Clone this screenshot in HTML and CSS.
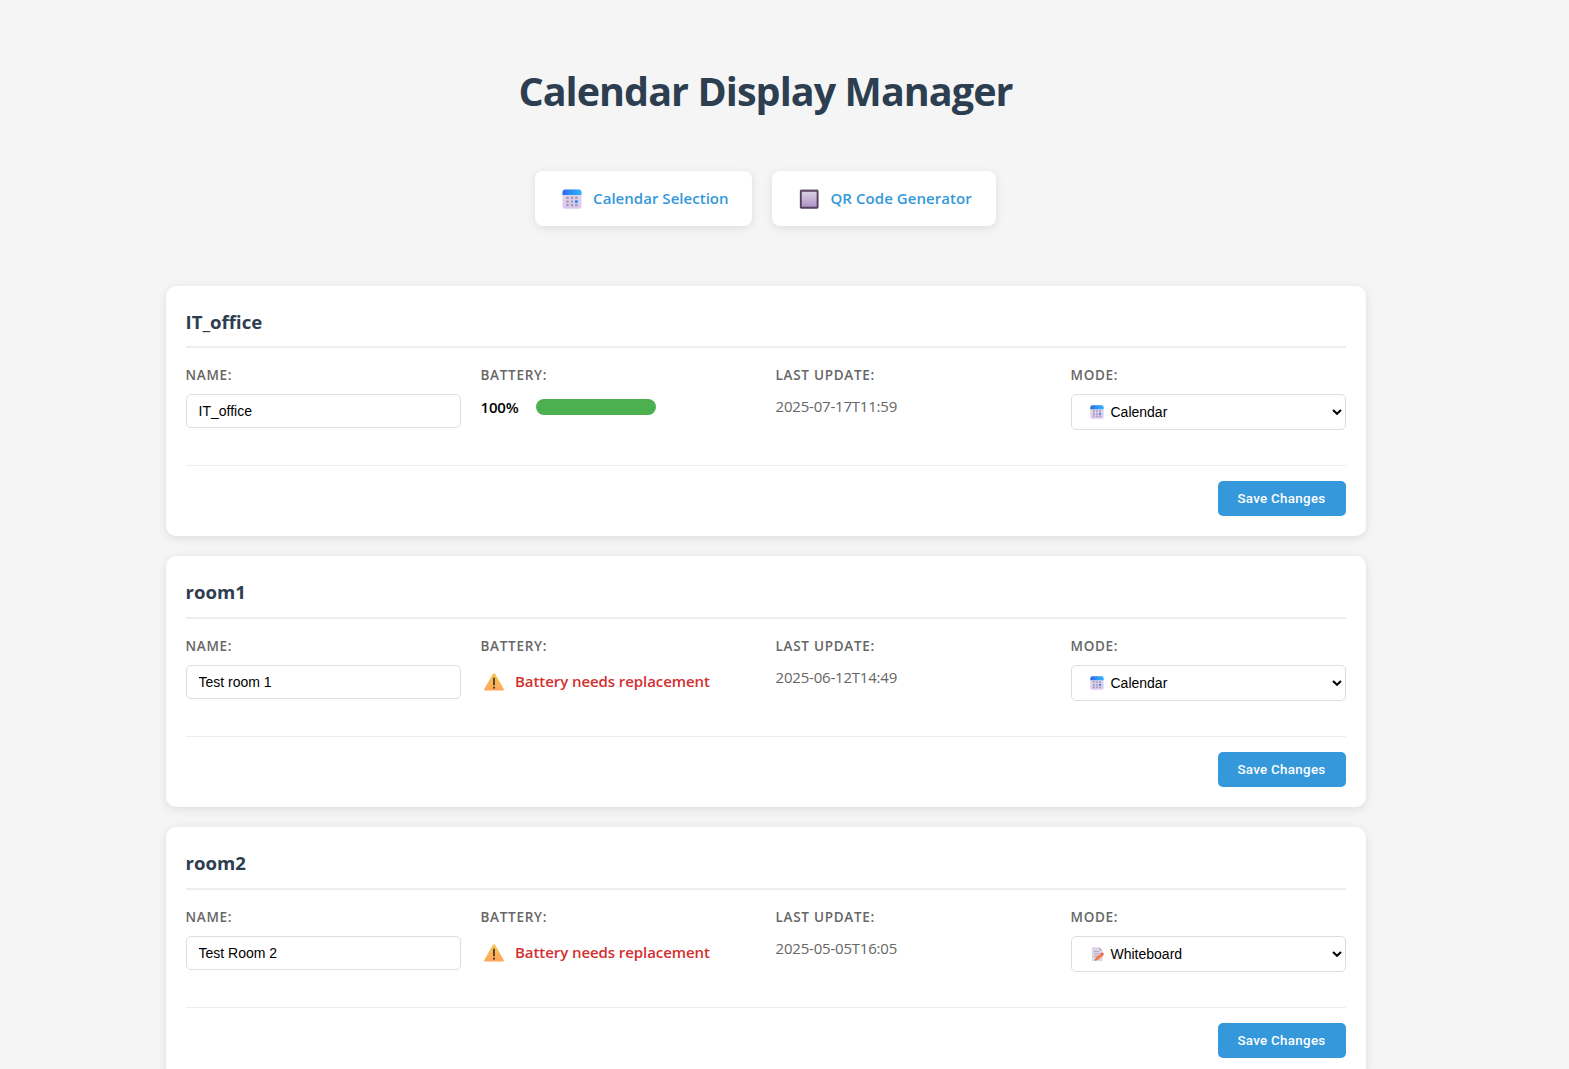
FILE: index.html
```html
<!DOCTYPE html>
<html lang="en">
<head>
<meta charset="utf-8">
<title>Calendar Display Manager</title>
<link rel="stylesheet" href="styles.css">
</head>
<body>
<svg class="defs" aria-hidden="true">
  <defs>
    <linearGradient id="blue" x1="0" y1="0" x2="1" y2="0"><stop offset="0" stop-color="#2b68e8"/><stop offset=".4" stop-color="#2b8df8"/><stop offset="1" stop-color="#2fb4ff"/></linearGradient>
    <linearGradient id="lilac" x1="0" y1="0" x2="0" y2="1"><stop offset="0" stop-color="#e3dcea"/><stop offset="1" stop-color="#dac6ef"/></linearGradient>
    <linearGradient id="violet" x1="0" y1="0" x2="0" y2="1"><stop offset="0" stop-color="#dcd3e4"/><stop offset="1" stop-color="#ac8fc6"/></linearGradient>
    <linearGradient id="amber" x1="0" y1="0" x2="0" y2="1"><stop offset="0" stop-color="#f7c84e"/><stop offset="1" stop-color="#ffa45c"/></linearGradient>
  </defs>
  <symbol id="calendar" viewBox="0 0 20 20">
    <rect x=".5" y=".5" width="19" height="19.2" rx="3" fill="url(#lilac)"/>
    <path d="M.5 6V3.5a3 3 0 0 1 3-3h13a3 3 0 0 1 3 3V6z" fill="url(#blue)"/>
    <g fill="#a59bb0"><path d="M4.3 7.6h2.4v2.4H4.3zM8.8 7.6h2.4v2.4H8.8zM13.2 7.6h2.4v2.4h-2.4zM4.3 11.4h2.4v2.4H4.3zM8.8 11.4h2.4v2.4H8.8zM4.3 15.1h2.4v2.2H4.3zM8.8 15.1h2.4v2.2H8.8zM13.2 15.1h2.4v2.2h-2.4z"/></g>
    <path d="M13 11.2h2.8V14H13z" fill="#2b8df8"/>
  </symbol>
  <symbol id="square" viewBox="0 0 20 20">
    <rect x="1.8" y="1.8" width="16.8" height="17" rx=".5" fill="url(#violet)" stroke="#56405f" stroke-width="1.9"/>
    <path d="M1.4.7h17.6" stroke="#a79bad" stroke-width=".8"/>
  </symbol>
  <symbol id="warning" viewBox="0 0 20 18">
    <path d="M8.9.8q1.1-1.2 2.2 0L19.7 16q.5 1.5-1 1.6H1.3q-1.5-.1-1-1.6z" fill="url(#amber)"/>
    <path d="M10 5.4v6.2" stroke="#544032" stroke-width="1.9" stroke-linecap="round"/><circle cx="10" cy="14.7" r="1.1" fill="#544032"/>
  </symbol>
  <symbol id="memo" viewBox="0 0 14 14">
    <path d="M2.8.2h6.5L12.5 3.4V14H2V1q0-.8.8-.8z" fill="#dcd5e4"/>
    <path d="M9.3.2v3.2h3.2z" fill="#b5a9c2"/>
    <path d="M4 4.5h5M4 6.8h5M4 9.2h3" stroke="#b0a5bc" stroke-width=".9"/>
    <path d="M5 13.4 5.9 10.500l5.4-4.6 2.2 2.4-5.4 4.5z" fill="#f97a43"/>
    <path d="m10.7 6.4.8-.7q.8-.5 1.7.4t.3 1.7l-.8.7z" fill="#ee5265"/>
    <path d="m5 13.4.4-1.3 1 1.1z" fill="#665263"/>
  </symbol>
  <symbol id="chevron" viewBox="0 0 10 6"><path d="M1 1l4 3.8L9 1" fill="none" stroke="#000" stroke-width="2"/></symbol>
</svg>
<div class="container">
  <h1>Calendar Display Manager</h1>
  <nav>
    <a class="nav-link"><svg><use href="#calendar"/></svg><span>Calendar Selection</span></a>
    <a class="nav-link wide"><svg><use href="#square"/></svg><span>QR Code Generator</span></a>
  </nav>

  <section class="card">
    <h2>IT_office</h2>
    <div class="fields">
      <div class="field"><label>NAME:</label><input type="text" value="IT_office"></div>
      <div class="field"><label>BATTERY:</label><div class="battery"><span>100%</span><div class="bar"></div></div></div>
      <div class="field"><label>LAST UPDATE:</label><div class="date">2025-07-17T11:59</div></div>
      <div class="field"><label>MODE:</label><div class="select"><svg class="mode-icon"><use href="#calendar"/></svg><span>Calendar</span><svg class="arrow"><use href="#chevron"/></svg></div></div>
    </div>
    <footer><button>Save Changes</button></footer>
  </section>

  <section class="card">
    <h2>room1</h2>
    <div class="fields">
      <div class="field"><label>NAME:</label><input type="text" value="Test room 1"></div>
      <div class="field"><label>BATTERY:</label><div class="warn"><svg><use href="#warning"/></svg><span>Battery needs replacement</span></div></div>
      <div class="field"><label>LAST UPDATE:</label><div class="date">2025-06-12T14:49</div></div>
      <div class="field"><label>MODE:</label><div class="select"><svg class="mode-icon"><use href="#calendar"/></svg><span>Calendar</span><svg class="arrow"><use href="#chevron"/></svg></div></div>
    </div>
    <footer><button>Save Changes</button></footer>
  </section>

  <section class="card">
    <h2>room2</h2>
    <div class="fields">
      <div class="field"><label>NAME:</label><input type="text" value="Test Room 2"></div>
      <div class="field"><label>BATTERY:</label><div class="warn"><svg><use href="#warning"/></svg><span>Battery needs replacement</span></div></div>
      <div class="field"><label>LAST UPDATE:</label><div class="date">2025-05-05T16:05</div></div>
      <div class="field"><label>MODE:</label><div class="select"><svg class="mode-icon"><use href="#memo"/></svg><span>Whiteboard</span><svg class="arrow"><use href="#chevron"/></svg></div></div>
    </div>
    <footer><button>Save Changes</button></footer>
  </section>
</div>
</body>
</html>
```
FILE: styles.css
```css
* { box-sizing: border-box; }
html { overflow: hidden; }
body {
  margin: 0;
  height: 1069px;
  overflow: hidden;
  background: #f5f5f5;
  font-family: "Open Sans", "Noto Sans", sans-serif;
  font-size: 15px;
  color: #000;
}
.defs { position: absolute; width: 0; height: 0; }
.container { width: 1200px; margin-left: 165.5px; padding-top: 60.6px; }
h1 {
  margin: 0 0 50px;
  height: 60px;
  line-height: 60px;
  text-align: center;
  font-size: 39.5px;
  font-weight: 700;
  letter-spacing: -0.93px;
  color: #2c3e50;
  white-space: nowrap;
}
nav { display: flex; justify-content: center; gap: 20px; margin-bottom: 60px; }
.nav-link {
  display: flex;
  align-items: center;
  width: 217.4px;
  height: 55px;
  padding-left: 27px;
  border-radius: 8px;
  background: #fff;
  box-shadow: 0 2px 8px rgba(0, 0, 0, .1);
  color: #3498db;
  font-weight: 600;
  letter-spacing: .03px;
  white-space: nowrap;
}
.nav-link.wide { width: 224.4px; letter-spacing: .06px; }
.nav-link svg { width: 20px; height: 20px; margin: 1px 11.5px 0 0; }
.nav-link span { padding-bottom: .6px; }
.card {
  height: 250.8px;
  margin-bottom: 20px;
  padding: 20px;
  border-radius: 10px;
  background: #fff;
  box-shadow: 0 2px 10px rgba(0, 0, 0, .1);
}
h2 {
  margin: 0 0 15px;
  height: 42.4px;
  line-height: 31.6px;
  border-bottom: 2px solid #eee;
  font-size: 18.6px;
  font-weight: 700;
  color: #2c3e50;
}
.fields { display: grid; grid-template-columns: repeat(4, 1fr); gap: 20px; height: 102.1px; }
.field { display: flex; flex-direction: column; align-items: flex-start; white-space: nowrap; }
label { height: 31.1px; line-height: 24.5px; font-size: 13.5px; font-weight: 600; letter-spacing: .72px; color: #666; }
input, .select {
  width: 275px;
  height: 34px;
  border: 1px solid #ddd;
  border-radius: 5px;
  background: #fff;
  font: 14px "Liberation Sans", sans-serif;
  color: #000;
}
input { padding: 0 12px; }
.select { display: flex; align-items: center; height: 36px; padding: 0 3px 0 18px; }
.mode-icon { width: 14px; height: 14px; margin-right: 7px; }
.arrow { width: 10px; height: 6px; margin-left: auto; }
.battery { display: flex; align-items: center; height: 26px; font-weight: 600; }
.battery span { width: 55.4px; letter-spacing: -.2px; }
.bar { width: 120px; height: 16px; border-radius: 8px; background: #4caf50; }
.date { height: 25px; line-height: 25px; letter-spacing: -.2px; color: #666; }
.warn { display: flex; align-items: center; height: 34px; font-weight: 600; letter-spacing: -.07px; color: #d32f2f; }
.warn svg { width: 20px; height: 18px; margin: 1px 11.5px 0 3px; }
.warn span { padding-bottom: 2px; }
footer { display: flex; justify-content: flex-end; padding-top: 15px; border-top: 1px solid #eee; }
button {
  width: 128px;
  height: 35px;
  padding: 0;
  border: 0;
  border-radius: 5px;
  background: #3498db;
  color: #fff;
  font: 500 13.333px Roboto, "Liberation Sans", sans-serif;
  letter-spacing: .3px;
}
```
